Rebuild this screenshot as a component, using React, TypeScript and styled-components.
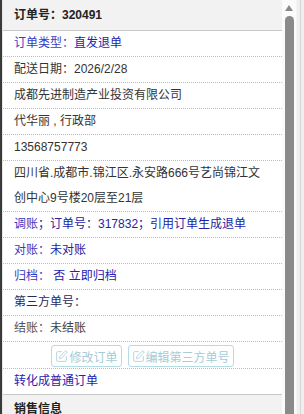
import React from 'react'
import styled, { createGlobalStyle } from 'styled-components'
import { SquarePen } from 'lucide-react'

const GlobalStyle = createGlobalStyle`
  html, body {
    margin: 0;
    padding: 0;
    overflow: hidden;
    background: #fff;
  }
  body {
    font-family: "Liberation Sans", "Noto Sans CJK SC", sans-serif;
    font-size: 12px;
    color: #333;
  }
`

const Page = styled.div`
  display: flex;
  height: 414px;
  width: 304px;
`

const LeftEdge = styled.div`
  width: 2px;
  background: #3a3a3a;
  flex-shrink: 0;
`

const Panel = styled.div`
  width: 279px;
  flex-shrink: 0;
  border-left: 1px solid #e6e6e6;
  overflow: hidden;
`

const Head = styled.div`
  background: #f2f2f2;
  border-bottom: 1px solid #c8c8c8;
  line-height: 30px;
  padding: 0 11px;
  font-weight: bold;
  color: #222;
`

const Row = styled.div<{ $solid?: boolean }>`
  line-height: 25px;
  padding: 0 16px 0 11px;
  border-bottom: 1px ${p => (p.$solid ? 'solid #c8c8c8' : 'dotted #bdbdbd')};
`

const Label = styled.span<{ $c?: string }>`
  color: ${p => p.$c || '#333'};
`

const Value = styled.span<{ $c?: string }>`
  color: ${p => p.$c || '#333'};
`

const BtnRow = styled.div`
  display: flex;
  justify-content: center;
  gap: 6px;
  padding: 3px 0 1px;
  border-bottom: 1px dotted #bdbdbd;
`

const OutlineBtn = styled.button`
  display: flex;
  align-items: center;
  gap: 1px;
  height: 22px;
  padding: 0 3px;
  border: 1px solid #b4dce4;
  border-radius: 3px;
  background: #fff;
  color: #a6ccd6;
  font: inherit;
  font-size: 12px;
  cursor: default;
`

const Link = styled.span`
  color: #2323b0;
`

const SectionHead = styled.div`
  background: #f2f2f2;
  line-height: 28px;
  padding: 0 11px;
  font-weight: bold;
  color: #222;
`

const Track = styled.div`
  width: 14px;
  flex-shrink: 0;
  display: flex;
  flex-direction: column;
  align-items: center;
  background: #fbfbfb;
  padding-top: 5px;
  gap: 5px;
`

const Arrow = styled.div`
  width: 0;
  height: 0;
  border-left: 4px solid transparent;
  border-right: 4px solid transparent;
  border-bottom: 6px solid #8a8a8a;
`

const Thumb = styled.div`
  width: 9px;
  flex: 1;
  background: #8a8a8a;
  border-radius: 5px 5px 0 0;
`

const RightStrip = styled.div`
  flex: 1;
  background: #efefef;
  border-left: 1px solid #f6f6f6;
  display: flex;
  justify-content: center;
  div {
    width: 1px;
    background: #d6d6d6;
  }
`

const blueL = '#3a3ac4'
const blueV = '#2323a8'

export default function App() {
  return (
    <>
      <GlobalStyle />
      <Page>
        <LeftEdge />
        <Panel>
          <Head>订单号：320491</Head>
          <Row>
            <Label $c={blueL}>订单类型：</Label>
            <Value $c={blueV}>直发退单</Value>
          </Row>
          <Row>配送日期：2026/2/28</Row>
          <Row>成都先进制造产业投资有限公司</Row>
          <Row>代华丽 , 行政部</Row>
          <Row>13568757773</Row>
          <Row>四川省.成都市.锦江区.永安路666号艺尚锦江文创中心9号楼20层至21层</Row>
          <Row>
            <Label $c={blueL}>调账</Label>
            <Value $c={blueV}>；订单号：317832；引用订单生成退单</Value>
          </Row>
          <Row>
            <Label $c={blueL}>对账：</Label>
            <Value $c={blueV}>未对账</Value>
          </Row>
          <Row>
            <Label $c={blueL}>归档：</Label>
            <Value $c={blueV}> 否 </Value>
            <Link>立即归档</Link>
          </Row>
          <Row>
            <Label $c="#2a2a5a">第三方单号：</Label>
          </Row>
          <Row>
            <Label $c="#555">结账：</Label>
            <Value $c="#444">未结账</Value>
          </Row>
          <BtnRow>
            <OutlineBtn>
              <SquarePen size={13} strokeWidth={1.5} />
              修改订单
            </OutlineBtn>
            <OutlineBtn>
              <SquarePen size={13} strokeWidth={1.5} />
              编辑第三方单号
            </OutlineBtn>
          </BtnRow>
          <Row $solid>
            <Link>转化成普通订单</Link>
          </Row>
          <SectionHead>销售信息</SectionHead>
        </Panel>
        <Track>
          <Arrow />
          <Thumb />
        </Track>
        <RightStrip>
          <div />
        </RightStrip>
      </Page>
    </>
  )
}
